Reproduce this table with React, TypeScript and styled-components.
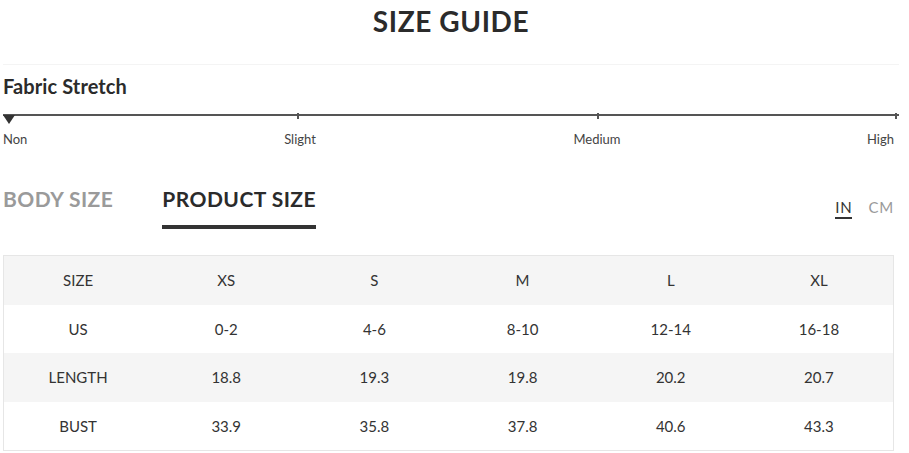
import React from "react";
import styled, { createGlobalStyle } from "styled-components";

const Global = createGlobalStyle`
  html, body { margin: 0; padding: 0; background: #fff; }
  body { font-family: Lato, "Noto Sans", sans-serif; color: #333; }
`;

const Page = styled.div`
  width: 896px;
  margin-left: 3px;
  display: flex;
  flex-direction: column;
`;

const Header = styled.div`
  height: 64px;
  border-bottom: 1px solid #f4f4f4;
  display: flex;
  justify-content: center;
  align-items: flex-start;
`;

const Title = styled.h1`
  margin: 4px 0 0;
  font-size: 28px;
  font-weight: 700;
  letter-spacing: 0.6px;
  color: #2b2b2b;
`;

const SectionTitle = styled.h2`
  margin: 9px 0 0;
  font-size: 20px;
  font-weight: 700;
  letter-spacing: 0.1px;
  color: #2b2b2b;
  line-height: 24px;
`;

const Scale = styled.div`
  margin-top: 16px;
  position: relative;
  height: 2px;
  background: #555;
`;

const Tick = styled.div<{ $left: number }>`
  position: absolute;
  left: ${(p) => p.$left}px;
  top: -1px;
  width: 1.5px;
  height: 6px;
  background: #555;
`;

const Marker = styled.div`
  position: absolute;
  left: 0;
  top: 1px;
  width: 0;
  height: 0;
  border-left: 6px solid transparent;
  border-right: 6px solid transparent;
  border-top: 9px solid #333;
`;

const ScaleLabels = styled.div`
  margin-top: 15px;
  position: relative;
  height: 16px;
  font-size: 13px;
  color: #444;
  line-height: 16px;
`;

const ScaleLabel = styled.span<{ $left?: number; $right?: number }>`
  position: absolute;
  top: 0;
  white-space: nowrap;
  ${(p) =>
    p.$right !== undefined
      ? `right: ${p.$right}px;`
      : p.$left === 0
      ? `left: 0;`
      : `left: ${p.$left}px; transform: translateX(-50%);`}
`;

const TabsRow = styled.div`
  margin-top: 40px;
  display: flex;
  align-items: flex-start;
`;

const Tab = styled.div<{ $active?: boolean }>`
  font-size: 21px;
  font-weight: 700;
  line-height: 24px;
  letter-spacing: 0.45px;
  color: ${(p) => (p.$active ? "#2b2b2b" : "#9a9a9a")};
  padding-bottom: 14px;
  margin-right: 49px;
  border-bottom: 4px solid ${(p) => (p.$active ? "#333" : "transparent")};
`;

const Units = styled.div`
  margin-left: auto;
  margin-right: 5px;
  margin-top: 11px;
  display: flex;
  gap: 16px;
`;

const Unit = styled.div<{ $active?: boolean }>`
  font-size: 15px;
  letter-spacing: 0.8px;
  line-height: 18px;
  color: ${(p) => (p.$active ? "#333" : "#9a9a9a")};
  padding-bottom: 1px;
  border-bottom: 2px solid ${(p) => (p.$active ? "#333" : "transparent")};
`;

const Table = styled.div`
  margin-top: 26px;
  width: 889px;
  border: 1px solid #e6e6e6;
  display: flex;
  flex-direction: column;
`;

const Row = styled.div<{ $shade?: boolean }>`
  display: grid;
  grid-template-columns: repeat(6, 1fr);
  height: 48.5px;
  align-items: center;
  background: ${(p) => (p.$shade ? "#f5f5f5" : "#fff")};
`;

const Cell = styled.div`
  text-align: center;
  font-size: 15px;
  color: #333;
`;

const rows = [
  ["SIZE", "XS", "S", "M", "L", "XL"],
  ["US", "0-2", "4-6", "8-10", "12-14", "16-18"],
  ["LENGTH", "18.8", "19.3", "19.8", "20.2", "20.7"],
  ["BUST", "33.9", "35.8", "37.8", "40.6", "43.3"],
];

export default function App() {
  return (
    <>
      <Global />
      <Page>
        <Header>
          <Title>SIZE GUIDE</Title>
        </Header>
        <SectionTitle>Fabric Stretch</SectionTitle>
        <Scale>
          <Tick $left={294} />
          <Tick $left={594} />
          <Tick $left={892} />
          <Marker />
        </Scale>
        <ScaleLabels>
          <ScaleLabel $left={0}>Non</ScaleLabel>
          <ScaleLabel $left={297}>Slight</ScaleLabel>
          <ScaleLabel $left={594}>Medium</ScaleLabel>
          <ScaleLabel $right={5}>High</ScaleLabel>
        </ScaleLabels>
        <TabsRow>
          <Tab>BODY SIZE</Tab>
          <Tab $active>PRODUCT SIZE</Tab>
          <Units>
            <Unit $active>IN</Unit>
            <Unit>CM</Unit>
          </Units>
        </TabsRow>
        <Table>
          {rows.map((r, i) => (
            <Row key={i} $shade={i % 2 === 0}>
              {r.map((c, j) => (
                <Cell key={j}>{c}</Cell>
              ))}
            </Row>
          ))}
        </Table>
      </Page>
    </>
  );
}
